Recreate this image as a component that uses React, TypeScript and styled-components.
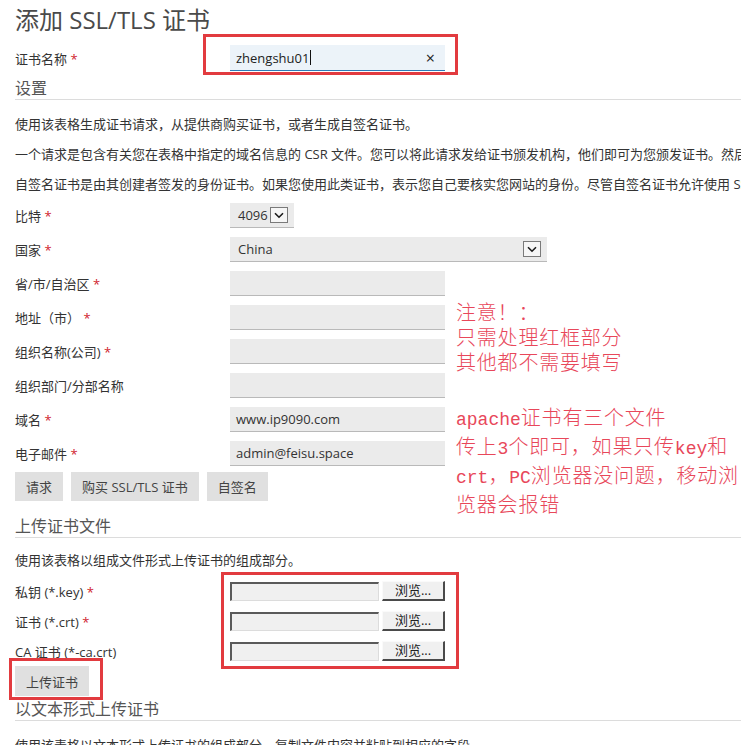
import React from "react";
import styled, { createGlobalStyle } from "styled-components";

const GlobalStyle = createGlobalStyle`
  html, body {
    margin: 0;
    padding: 0;
    background: #ffffff;
    overflow: hidden;
  }
  body {
    font-family: "Open Sans", "Noto Sans CJK SC", sans-serif;
    color: #333;
  }
`;

const Page = styled.div`
  position: relative;
  width: 741px;
  height: 745px;
  box-sizing: border-box;
  padding-left: 15px;
  overflow: hidden;
`;

const Title = styled.h1`
  margin: 0;
  font-size: 24px;
  line-height: 40px;
  font-weight: 400;
  color: #4a4a4a;
  white-space: nowrap;
`;

const SectionHeading = styled.h2<{ $mt: number }>`
  margin: ${(p) => p.$mt}px 0 0;
  font-size: 16px;
  line-height: 22px;
  font-weight: 400;
  color: #555;
  border-bottom: 1px solid #dcdcdc;
  white-space: nowrap;
`;

const Para = styled.p<{ $mt: number }>`
  margin: ${(p) => p.$mt}px 0 0;
  font-size: 13px;
  line-height: 20px;
  color: #333;
  white-space: nowrap;
`;

const FormGrid = styled.div<{ $mt: number; $gap: number; $row: number }>`
  position: relative;
  margin-top: ${(p) => p.$mt}px;
  display: grid;
  grid-template-columns: 215px 1fr;
  grid-auto-rows: ${(p) => p.$row}px;
  row-gap: ${(p) => p.$gap}px;
  align-items: center;
`;

const Label = styled.div`
  font-size: 13px;
  color: #333;
  white-space: nowrap;
`;

const Req = styled.span`
  color: #d0232e;
`;

const TextInput = styled.div<{ $w?: number }>`
  box-sizing: border-box;
  width: ${(p) => p.$w ?? 215}px;
  height: 25px;
  background: #ebebeb;
  border-bottom: 1px solid #b9b9b9;
  font-size: 13px;
  line-height: 24px;
  padding-left: 6px;
  color: #333;
  white-space: nowrap;
`;

const NameInput = styled.div`
  position: relative;
  box-sizing: border-box;
  width: 215px;
  height: 26px;
  background: #ecf3f9;
  border-bottom: 1px solid #2c7bb6;
  display: flex;
  align-items: center;
  padding: 0 10px 0 6px;
  font-size: 13px;
  color: #222;
`;

const Caret = styled.span`
  display: inline-block;
  width: 1px;
  height: 15px;
  background: #111;
  margin-left: 1px;
`;

const ClearMark = styled.span`
  margin-left: auto;
  font-size: 16px;
  line-height: 1;
  color: #222;
`;

const SelectBox = styled.div<{ $w: number }>`
  box-sizing: border-box;
  width: ${(p) => p.$w}px;
  height: 25px;
  background: #ebebeb;
  border-bottom: 1px solid #b9b9b9;
  display: flex;
  align-items: center;
  justify-content: space-between;
  padding: 0 6px 0 8px;
  font-size: 13px;
  color: #333;
`;

const ArrowBox = styled.span`
  box-sizing: border-box;
  width: 18px;
  height: 16px;
  border: 1px solid #7a7a7a;
  background: #f6f6f6;
  display: flex;
  align-items: center;
  justify-content: center;
`;

const ButtonBar = styled.div<{ $mt: number }>`
  margin-top: ${(p) => p.$mt}px;
  display: flex;
  gap: 8px;
`;

const Button = styled.button<{ $h: number }>`
  position: relative;
  height: ${(p) => p.$h}px;
  padding: 0 11px;
  border: none;
  background: #e0e0e0;
  color: #444;
  font-family: "Open Sans", "Noto Sans CJK SC", sans-serif;
  font-size: 13px;
  cursor: pointer;
  white-space: nowrap;
`;

const FileControl = styled.div`
  display: flex;
  gap: 3px;
  align-items: center;
`;

const FileField = styled.div`
  box-sizing: border-box;
  width: 149px;
  height: 19px;
  background: #f0f0f0;
  border-top: 2px solid #5a5a5a;
  border-left: 2px solid #5a5a5a;
  border-right: 1px solid #dcdcdc;
  border-bottom: 1px solid #dcdcdc;
`;

const BrowseButton = styled.div`
  box-sizing: border-box;
  width: 63px;
  height: 20px;
  background: #f0f0f0;
  border-top: 1px solid #fafafa;
  border-left: 1px solid #fafafa;
  border-right: 2px solid #4a4a4a;
  border-bottom: 2px solid #4a4a4a;
  font-size: 13px;
  line-height: 17px;
  text-align: center;
  color: #222;
`;

const UploadWrap = styled.div`
  position: relative;
  margin-top: 5px;
  width: 74px;
`;

const RedFrame = styled.div<{ $l: number; $t: number; $w: number; $h: number }>`
  position: absolute;
  left: ${(p) => p.$l}px;
  top: ${(p) => p.$t}px;
  width: ${(p) => p.$w}px;
  height: ${(p) => p.$h}px;
  box-sizing: border-box;
  border: 3px solid #e23b3f;
  pointer-events: none;
`;

const Note = styled.div`
  position: absolute;
  left: 456px;
  top: 299px;
  color: #e8475a;
  font-family: "Noto Sans CJK SC", sans-serif;
  font-weight: 300;
  font-size: 20px;
  letter-spacing: 0.8px;
  line-height: 25px;
  white-space: nowrap;
`;

const NoteBlock = styled.div<{ $mt: number }>`
  margin-top: ${(p) => p.$mt}px;
`;

const Latin = styled.span`
  font-family: "Liberation Mono", monospace;
  font-weight: 400;
  font-size: 18px;
  letter-spacing: 0;
`;

const Chevron = () => (
  <svg width="10" height="7" viewBox="0 0 10 7">
    <path d="M1 1.2 L5 5.2 L9 1.2" fill="none" stroke="#1a1a1a" strokeWidth="1.6" />
  </svg>
);

const textRows: { label: string; req: boolean; value: string }[] = [
  { label: "省/市/自治区", req: true, value: "" },
  { label: "地址（市） ", req: true, value: "" },
  { label: "组织名称(公司)", req: true, value: "" },
  { label: "组织部门/分部名称", req: false, value: "" },
  { label: "域名", req: true, value: "www.ip9090.com" },
  { label: "电子邮件", req: true, value: "admin@feisu.space" },
];

const fileRows: { label: string; req: boolean }[] = [
  { label: "私钥 (*.key)", req: true },
  { label: "证书 (*.crt)", req: true },
  { label: "CA 证书 (*-ca.crt)", req: false },
];

const LabelText = ({ label, req }: { label: string; req: boolean }) => (
  <Label>
    {label}
    {req && <Req> *</Req>}
  </Label>
);

export default function App() {
  return (
    <>
      <GlobalStyle />
      <Page>
        <Title>添加 SSL/TLS 证书</Title>

        <FormGrid $mt={5} $gap={0} $row={26}>
          <LabelText label="证书名称" req />
          <NameInput>
            zhengshu01
            <Caret />
            <ClearMark>×</ClearMark>
            <RedFrame $l={-27} $t={-11} $w={255} $h={41} />
          </NameInput>
        </FormGrid>

        <SectionHeading $mt={6}>设置</SectionHeading>
        <Para $mt={14}>使用该表格生成证书请求，从提供商购买证书，或者生成自签名证书。</Para>
        <Para $mt={10}>
          一个请求是包含有关您在表格中指定的域名信息的 CSR 文件。您可以将此请求发给证书颁发机构，他们即可为您颁发证书。然后，您可以上传该证书。
        </Para>
        <Para $mt={10}>
          自签名证书是由其创建者签发的身份证书。如果您使用此类证书，表示您自己要核实您网站的身份。尽管自签名证书允许使用 SSL 协议。
        </Para>

        <FormGrid $mt={9} $gap={9} $row={25}>
          <LabelText label="比特" req />
          <SelectBox $w={64}>
            4096
            <ArrowBox>
              <Chevron />
            </ArrowBox>
          </SelectBox>
          <LabelText label="国家" req />
          <SelectBox $w={317}>
            China
            <ArrowBox>
              <Chevron />
            </ArrowBox>
          </SelectBox>
          {textRows.map((r) => (
            <React.Fragment key={r.label}>
              <LabelText label={r.label} req={r.req} />
              <TextInput>{r.value}</TextInput>
            </React.Fragment>
          ))}
        </FormGrid>

        <ButtonBar $mt={6}>
          <Button $h={29}>请求</Button>
          <Button $h={29}>购买 SSL/TLS 证书</Button>
          <Button $h={29}>自签名</Button>
        </ButtonBar>

        <SectionHeading $mt={14}>上传证书文件</SectionHeading>
        <Para $mt={12}>使用该表格以组成文件形式上传证书的组成部分。</Para>

        <FormGrid $mt={11} $gap={10} $row={20}>
          {fileRows.map((r) => (
            <React.Fragment key={r.label}>
              <LabelText label={r.label} req={r.req} />
              <FileControl>
                <FileField />
                <BrowseButton>浏览...</BrowseButton>
              </FileControl>
            </React.Fragment>
          ))}
          <RedFrame $l={206} $t={-9} $w={238} $h={97} />
        </FormGrid>

        <UploadWrap>
          <Button $h={30}>上传证书</Button>
          <RedFrame $l={-6} $t={-8} $w={94} $h={42} />
        </UploadWrap>

        <SectionHeading $mt={2}>以文本形式上传证书</SectionHeading>
        <Para $mt={14}>使用该表格以文本形式上传证书的组成部分。复制文件内容并粘贴到相应的字段。</Para>

        <Note>
          <div>注意！：</div>
          <div>只需处理红框部分</div>
          <div>其他都不需要填写</div>
          <NoteBlock $mt={30}>
            <Latin>apache</Latin>证书有三个文件
          </NoteBlock>
          <div>
            传上<Latin>3</Latin>个即可，如果只传<Latin>key</Latin>和
          </div>
          <div>
            <Latin>crt</Latin>，<Latin>PC</Latin>浏览器没问题，移动浏
          </div>
          <div>览器会报错</div>
        </Note>
      </Page>
    </>
  );
}
